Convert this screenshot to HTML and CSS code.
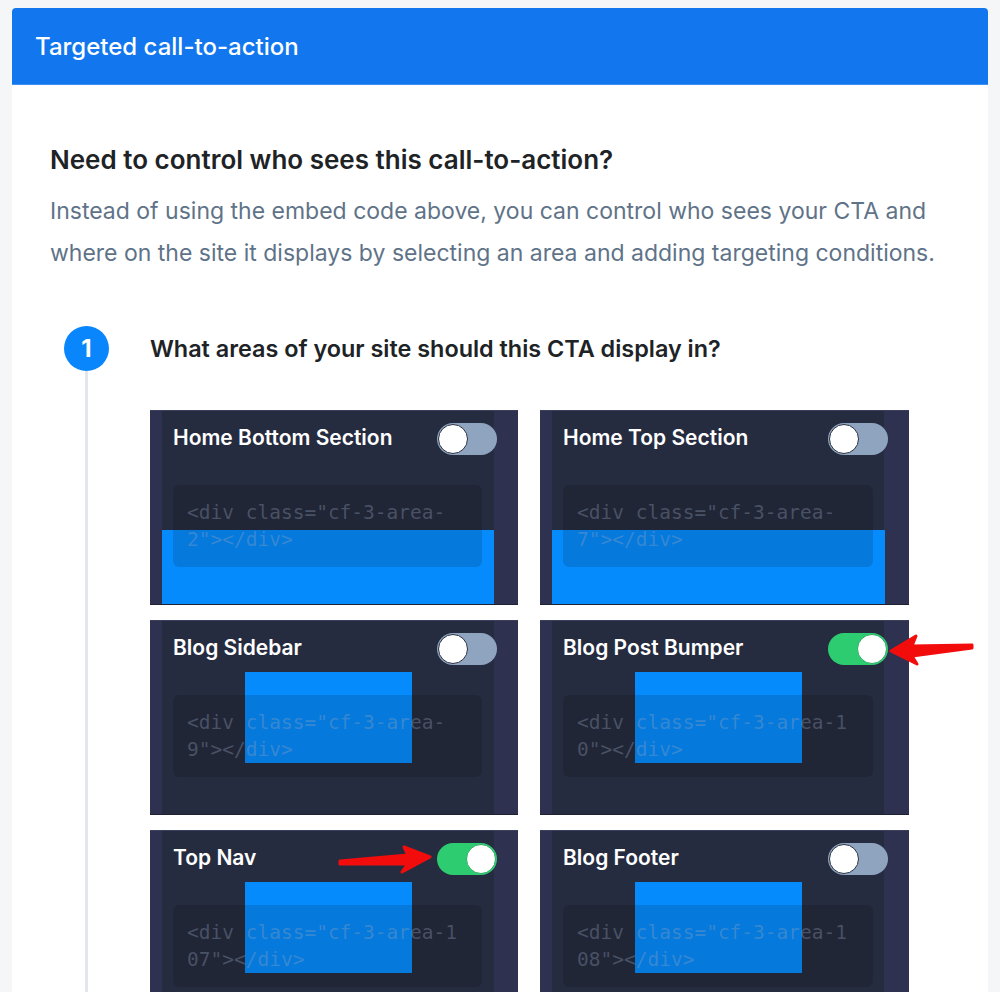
FILE: index.html
```html
<!DOCTYPE html>
<html lang="en">
<head>
    <meta charset="UTF-8">
    <meta name="viewport" content="width=device-width, initial-scale=1.0">
    <title>Targeted call-to-action</title>
    <link rel="stylesheet" href="styles.css">
</head>
<body>
    <div class="panel">
        <div class="panel-header">
            <h2>Targeted call-to-action</h2>
        </div>
        <div class="panel-body">
            <h3 class="intro-title">Need to control who sees this call-to-action?</h3>
            <p class="intro-text">Instead of using the embed code above, you can control who sees your CTA and where on the site it displays by selecting an area and adding targeting conditions.</p>

            <div class="step">
                <div class="step-rail">
                    <span class="step-num">1</span>
                    <span class="step-line"></span>
                </div>
                <div class="step-content">
                    <h4 class="step-title">What areas of your site should this CTA display in?</h4>

                    <div class="area-grid">
                        <div class="area-card">
                            <div class="area-preview preview-bottom"></div>
                            <div class="area-head">
                                <span class="area-name">Home Bottom Section</span>
                                <span class="toggle"></span>
                            </div>
                            <div class="area-code">&lt;div class="cf-3-area-<br>2"&gt;&lt;/div&gt;</div>
                        </div>
                        <div class="area-card">
                            <div class="area-preview preview-bottom"></div>
                            <div class="area-head">
                                <span class="area-name">Home Top Section</span>
                                <span class="toggle"></span>
                            </div>
                            <div class="area-code">&lt;div class="cf-3-area-<br>7"&gt;&lt;/div&gt;</div>
                        </div>
                        <div class="area-card">
                            <div class="area-preview preview-middle"></div>
                            <div class="area-head">
                                <span class="area-name">Blog Sidebar</span>
                                <span class="toggle"></span>
                            </div>
                            <div class="area-code">&lt;div class="cf-3-area-<br>9"&gt;&lt;/div&gt;</div>
                        </div>
                        <div class="area-card">
                            <div class="area-preview preview-middle"></div>
                            <div class="area-head">
                                <span class="area-name">Blog Post Bumper</span>
                                <span class="toggle on"></span>
                            </div>
                            <div class="area-code">&lt;div class="cf-3-area-1<br>0"&gt;&lt;/div&gt;</div>
                        </div>
                        <div class="area-card">
                            <div class="area-preview preview-middle"></div>
                            <div class="area-head">
                                <span class="area-name">Top Nav</span>
                                <span class="toggle on"></span>
                            </div>
                            <div class="area-code">&lt;div class="cf-3-area-1<br>07"&gt;&lt;/div&gt;</div>
                        </div>
                        <div class="area-card">
                            <div class="area-preview preview-middle"></div>
                            <div class="area-head">
                                <span class="area-name">Blog Footer</span>
                                <span class="toggle"></span>
                            </div>
                            <div class="area-code">&lt;div class="cf-3-area-1<br>08"&gt;&lt;/div&gt;</div>
                        </div>
                    </div>
                </div>
            </div>
        </div>
    </div>

    <!-- annotation arrows drawn over the screenshot -->
    <svg class="annotations" width="1000" height="992" viewBox="0 0 1000 992">
        <path d="M891 651 L916 636 L912 646 L972 645 L972 648 L912 656 L917 664 Z" fill="#f20c0c" stroke="#f20c0c" stroke-width="3" stroke-linejoin="round"/>
        <path d="M430 857 L404 847 L408 855 L340 861 L340 864 L408 864 L402 872 Z" fill="#f20c0c" stroke="#f20c0c" stroke-width="3" stroke-linejoin="round"/>
    </svg>
</body>
</html>
```

FILE: styles.css
```css
body {
    margin: 0;
    background-color: #f4f6f8;
    font-family: Inter, "Noto Sans", sans-serif;
    color: #222;
    overflow: hidden;
}
.panel {
    margin: 8px 12px 0;
    background-color: #fff;
    border-radius: 4px 4px 0 0;
}
.panel-header {
    height: 76px;
    background-color: #1277ee;
    border-bottom: 1px solid #3f90f3;
    border-radius: 4px 4px 0 0;
    padding-left: 23px;
    display: flex;
    align-items: center;
}
.panel-header h2 {
    margin: 0;
    color: #fff;
    font-size: 24px;
    font-weight: 500;
}
.panel-body {
    padding: 60px 38px 0;
}
.intro-title {
    margin: 0;
    font-size: 26px;
    line-height: 30px;
    font-weight: 600;
    color: #202326;
}
.intro-text {
    margin: 15px 0 0;
    font-size: 23px;
    line-height: 42px;
    color: #5f7388;
}
.step {
    display: flex;
    margin-top: 52px;
}
.step-rail {
    width: 45px;
    margin-left: 14px;
    margin-right: 41px;
    display: flex;
    flex-direction: column;
    align-items: center;
}
.step-num {
    width: 45px;
    height: 45px;
    border-radius: 50%;
    background-color: #0a86fc;
    color: #fff;
    font-size: 24px;
    font-weight: 700;
    display: flex;
    align-items: center;
    justify-content: center;
    flex-shrink: 0;
}
.step-line {
    width: 3px;
    flex: 1;
    background-color: #e3e7ed;
}
.step-content {
    flex: 1;
}
.step-title {
    margin: 0 0 39px;
    font-size: 23.4px;
    line-height: 45px;
    font-weight: 600;
    color: #202326;
}
.area-grid {
    display: grid;
    grid-template-columns: 368px 369px;
    column-gap: 22px;
    row-gap: 15px;
}
.area-card {
    position: relative;
    height: 193px;
    border-top: 1px solid #3a3f5e;
    border-bottom: 1px solid #1d2131;
    background: linear-gradient(to right, #2e3250 0, #2e3250 12px, #262c40 12px, #262c40 344px, #2e3250 344px);
}
.area-preview {
    position: absolute;
    background-color: #068bfd;
}
.preview-bottom {
    left: 12px;
    right: 24px;
    top: 119px;
    bottom: 0;
}
.preview-middle {
    left: 95px;
    width: 167px;
    top: 51px;
    height: 91px;
}
.area-head {
    position: relative;
    display: flex;
    align-items: center;
    justify-content: space-between;
    padding: 12px 21px 0 23px;
}
.area-name {
    color: #fff;
    font-size: 21px;
    line-height: 28px;
    font-weight: 600;
    margin-top: -3px;
}
.toggle {
    position: relative;
    width: 60px;
    height: 32px;
    border-radius: 16px;
    background-color: #8ea4bf;
}
.toggle::after {
    content: "";
    position: absolute;
    top: 1px;
    left: 1px;
    width: 28px;
    height: 28px;
    border-radius: 50%;
    background-color: #fff;
    border: 1px solid #2a3142;
}
.toggle.on {
    background-color: #2ecc71;
}
.toggle.on::after {
    left: auto;
    right: 1px;
    border-color: #27ae60;
}
.area-code {
    position: relative;
    z-index: 1;
    margin: 30px 36px 0 23px;
    height: 54px;
    padding: 14px;
    border-radius: 6px;
    background-color: rgba(0, 0, 0, 0.13);
    font-family: "DejaVu Sans Mono", monospace;
    font-size: 19.5px;
    line-height: 27px;
    color: rgba(150, 165, 190, 0.35);
    white-space: nowrap;
}
.annotations {
    position: absolute;
    top: 0;
    left: 0;
    pointer-events: none;
}
```
